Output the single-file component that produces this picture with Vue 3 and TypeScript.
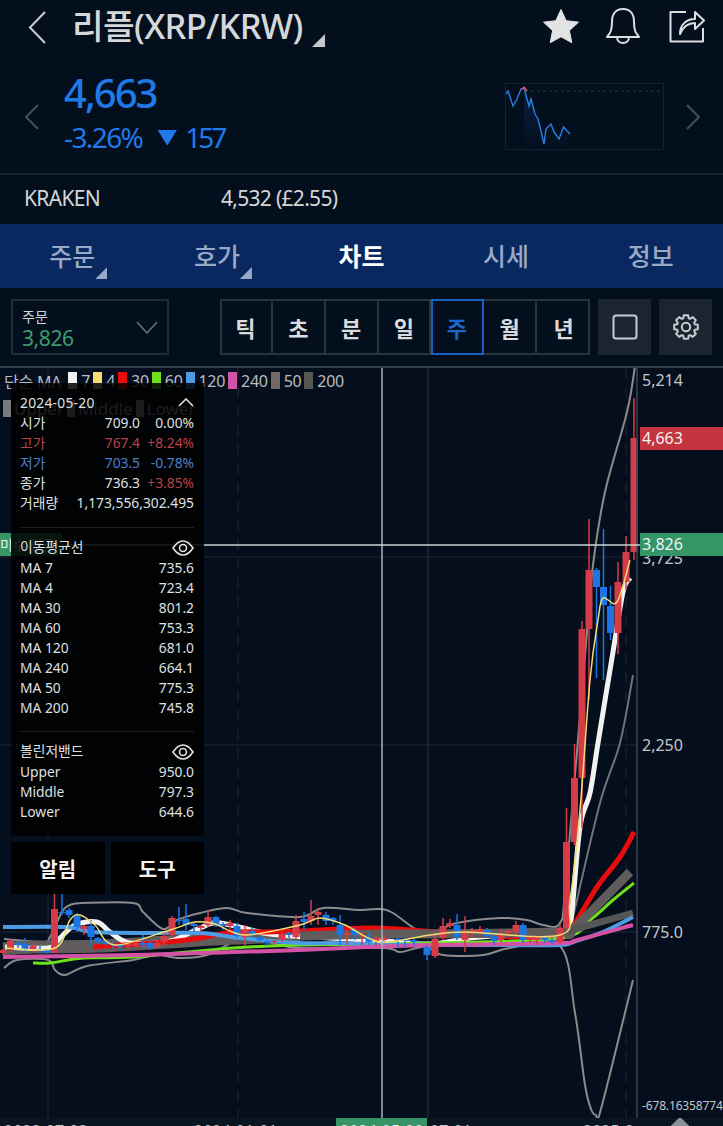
<script setup lang="ts">
import { computed } from 'vue';

type Candle = [number, number, number, number, number, 'r' | 'b'];
type Line = { color: string; width: number; pts: number[][] };

const tabs = [
    { name: '주문', more: true },
    { name: '호가', more: true },
    { name: '차트', active: true },
    { name: '시세' },
    { name: '정보' }
];
const periods = ['틱', '초', '분', '일', '주', '월', '년'];

const legend = [
    { color: '#f1f1f1', label: '7' },
    { color: '#f4dc72', label: '4' },
    { color: '#e80c0c', label: '30' },
    { color: '#6fe01c', label: '60' },
    { color: '#4d9be2', label: '120' },
    { color: '#d452a6', label: '240' },
    { color: '#6f6a68', label: '50' },
    { color: '#565656', label: '200' }
];

const quote = [
    { k: '시가', v: '709.0', p: '0.00%', tone: '' },
    { k: '고가', v: '767.4', p: '+8.24%', tone: 'up' },
    { k: '저가', v: '703.5', p: '-0.78%', tone: 'down' },
    { k: '종가', v: '736.3', p: '+3.85%', tone: 'close' }
];
const maRows = [
    ['MA 7', '735.6'], ['MA 4', '723.4'], ['MA 30', '801.2'], ['MA 60', '753.3'],
    ['MA 120', '681.0'], ['MA 240', '664.1'], ['MA 50', '775.3'], ['MA 200', '745.8']
];
const bandRows = [['Upper', '950.0'], ['Middle', '797.3'], ['Lower', '644.6']];

const axis = [
    { y: 380, t: '5,214' },
    { y: 558, t: '3,725' },
    { y: 745, t: '2,250' },
    { y: 932, t: '775.0' }
];

// x, wick top, body top, body bottom, wick bottom
const candles: Candle[] = [
    [3, 949, 950, 953, 955, 'r'], [10.5, 939, 941, 950, 952, 'r'], [18, 941, 943, 945, 948, 'b'],
    [25, 938, 944, 950, 953, 'b'], [33, 943, 946, 949, 952, 'r'], [40, 946, 949, 950, 953, 'b'],
    [47, 949, 949, 953, 953, 'b'], [54.5, 888, 909, 953, 953, 'r'], [62, 894, 912, 913, 915, 'b'],
    [69, 908, 910, 915, 918, 'b'], [77, 913, 916, 927, 932, 'b'], [84, 925, 926, 929, 935, 'r'],
    [91, 920, 926, 937, 946, 'b'], [98, 937, 938, 942, 944, 'b'], [106, 940, 941, 944, 946, 'b'],
    [113, 942, 944, 945, 948, 'b'], [120, 945, 945, 947, 950, 'b'], [128, 943, 944, 946, 949, 'r'],
    [136, 939, 943, 946, 948, 'r'], [143, 935, 943, 945, 947, 'b'], [150, 941, 943, 948, 950, 'b'],
    [157, 941, 943, 947, 949, 'r'], [164, 932, 936, 942, 944, 'r'], [172, 916, 918, 935, 937, 'r'],
    [179, 907, 920, 921, 925, 'b'], [186, 904, 919, 925, 930, 'b'], [194, 922, 924, 926, 932, 'b'],
    [201, 925, 926, 928, 932, 'r'], [208, 910, 917, 925, 927, 'r'], [216, 916, 917, 925, 927, 'b'],
    [223, 922, 924, 926, 930, 'b'], [230, 920, 923, 926, 930, 'r'], [237, 923, 926, 936, 938, 'b'],
    [245, 925, 930, 937, 946, 'r'], [252, 928, 931, 935, 938, 'b'], [260, 935, 937, 940, 943, 'b'],
    [267, 939, 941, 943, 946, 'b'], [274, 940, 941, 942, 945, 'r'], [282, 931, 934, 940, 942, 'r'],
    [289, 932, 933, 935, 938, 'b'], [296, 915, 921, 937, 939, 'r'], [304, 912, 919, 922, 930, 'b'],
    [311, 900, 916, 921, 925, 'r'], [318, 908, 912, 915, 925, 'r'], [326, 912, 915, 921, 925, 'b'],
    [333, 917, 918, 921, 925, 'b'], [340, 915, 925, 935, 945, 'b'], [347, 930, 933, 935, 945, 'r'],
    [355, 927, 930, 935, 940, 'b'], [362, 932, 935, 936, 945, 'r'], [369, 932, 937, 942, 945, 'b'],
    [376, 936, 938, 941, 946, 'r'], [384, 935, 938, 940, 942, 'r'], [398, 937, 939, 941, 948, 'b'],
    [405, 937, 939, 941, 947, 'b'], [414, 939, 940, 942, 946, 'b'], [427, 945, 947, 955, 960, 'b'],
    [435, 932, 939, 956, 958, 'r'], [443, 918, 926, 938, 940, 'r'], [450, 919, 923, 926, 928, 'r'],
    [457, 914, 925, 937, 940, 'b'], [465, 916, 932, 940, 952, 'r'], [472, 928, 930, 932, 938, 'r'],
    [480, 926, 929, 932, 934, 'r'], [487, 928, 930, 936, 938, 'b'], [494, 933, 936, 941, 945, 'b'],
    [501, 929, 934, 940, 942, 'r'], [508, 929, 931, 933, 936, 'r'], [516, 921, 925, 932, 936, 'r'],
    [523, 923, 925, 940, 943, 'b'], [530, 937, 938, 940, 943, 'r'], [537, 936, 938, 940, 945, 'r'],
    [545, 936, 937, 940, 943, 'b'], [552, 938, 940, 942, 944, 'b'], [560, 924, 928, 942, 944, 'r'],
    [566.5, 808, 842, 928, 930, 'r'], [574.5, 744, 778, 842, 845, 'r'], [582, 621, 629, 778, 828, 'r'],
    [589, 519, 570, 629, 700, 'r'], [596.5, 568, 570, 587, 678, 'b'], [603.5, 529, 587, 605, 680, 'b'],
    [610.5, 586, 606, 633, 640, 'b'], [618, 562, 582, 633, 654, 'r'], [626, 536, 552, 582, 590, 'r'],
    [634, 398, 438, 552, 560, 'r']
];

const lines: Line[] = [
    {
        color: '#8b8b8b', width: 2,
        pts: [[4, 939], [43, 942], [50, 937], [62, 912], [70, 905], [83, 903], [133, 903], [143, 912], [163, 929], [177, 920], [200, 913], [227, 908], [247, 913], [300, 917], [323, 908], [360, 910], [380, 909], [393, 913], [417, 930], [433, 932], [457, 923], [500, 918], [527, 920], [543, 925], [560, 923], [566, 880], [587, 632], [593, 565], [605, 492], [627, 412], [635, 366]]
    },
    {
        color: '#8b8b8b', width: 2,
        pts: [[4, 968], [17, 960], [48, 960], [55, 970], [65, 975], [87, 966], [133, 960], [157, 955], [180, 958], [207, 955], [243, 938], [267, 942], [300, 948], [383, 948], [400, 952], [417, 948], [428, 947], [443, 955], [483, 955], [510, 948], [560, 946], [575, 1013], [585, 1085], [591, 1109], [596, 1115], [601, 1109], [633, 980]]
    },
    {
        color: '#70747a', width: 2,
        pts: [[573, 917], [600, 803], [620, 743], [633, 675]]
    },
    {
        color: '#5f5c5b', width: 13,
        pts: [[3, 949], [33, 947], [100, 946], [167, 942], [233, 938], [300, 936]]
    },
    {
        color: '#f2f2f2', width: 5,
        pts: [[5, 947], [48, 948], [58, 940], [75, 925], [97, 922], [110, 932], [130, 943], [170, 941], [200, 928], [220, 923], [270, 934], [330, 938], [385, 941], [430, 944], [470, 938], [520, 934], [565, 932], [571, 920], [580, 827], [590, 793], [598, 743], [613, 652], [623, 592], [630, 578]]
    },
    {
        color: '#e80c0c', width: 5,
        pts: [[93, 947], [167, 942], [200, 938], [233, 932], [267, 932], [300, 931], [367, 928], [410, 930], [480, 935], [560, 938], [575, 923], [597, 887], [620, 857], [634, 832]]
    },
    {
        color: '#6fe01c', width: 3,
        pts: [[33, 963], [50, 963], [83, 958], [133, 957], [233, 948], [300, 945], [433, 943], [560, 938], [590, 920], [613, 900], [634, 883]]
    },
    {
        color: '#5f5c5b', width: 9,
        pts: [[300, 936], [383, 934], [433, 934], [560, 932], [572, 930], [630, 872]]
    },
    {
        color: '#555', width: 7,
        pts: [[560, 932], [572, 930], [633, 913]]
    },
    {
        color: '#4d9be2', width: 4,
        pts: [[3, 927], [67, 927], [93, 932], [150, 933], [200, 933], [240, 938], [300, 943], [333, 943], [400, 945], [500, 945], [560, 945], [573, 942], [603, 932], [633, 917]]
    },
    {
        color: '#d452a6', width: 4,
        pts: [[3, 957], [133, 955], [233, 952], [300, 950], [367, 947], [433, 945], [560, 943], [577, 940], [633, 925]]
    }
];

const yellow: Line = {
    color: '#f4dc72', width: 1.5,
    pts: [[5, 948], [55, 948], [70, 920], [80, 915], [95, 925], [115, 945], [170, 930], [195, 922], [215, 924], [245, 935], [300, 925], [320, 918], [345, 925], [380, 942], [430, 935], [465, 932], [560, 935], [570, 900], [580, 810], [590, 680], [598, 620], [603, 598], [617, 602], [630, 560]]
};

const toPoints = (pts: number[][]) => pts.map(p => p.join(',')).join(' ');

// catmull-rom through the points so the averages don't look angular
const smooth = (pts: number[][]) => {
    let d = `M${pts[0][0]} ${pts[0][1]}`;
    for (let i = 0; i < pts.length - 1; i++) {
        const p0 = pts[Math.max(i - 1, 0)];
        const p1 = pts[i];
        const p2 = pts[i + 1];
        const p3 = pts[Math.min(i + 2, pts.length - 1)];
        const c1x = p1[0] + (p2[0] - p0[0]) / 6;
        const c1y = p1[1] + (p2[1] - p0[1]) / 6;
        const c2x = p2[0] - (p3[0] - p1[0]) / 6;
        const c2y = p2[1] - (p3[1] - p1[1]) / 6;
        d += `C${c1x.toFixed(1)} ${c1y.toFixed(1)} ${c2x.toFixed(1)} ${c2y.toFixed(1)} ${p2[0]} ${p2[1]}`;
    }
    return d;
};

const miniPts = [[1, 11], [3, 8], [8, 23], [12, 16], [16, 6], [19, 5], [24, 23], [26, 16], [30, 31], [33, 36], [36, 48], [39, 61], [41, 46], [46, 41], [49, 49], [54, 56], [58.5, 44], [65, 51]];
const miniLine = toPoints(miniPts);
const miniFill = computed(() => `19,66 19,5 ${toPoints(miniPts.slice(5))} 65,66`);

const gearPath = computed(() => {
    const parts: string[] = [];
    for (let i = 0; i < 8; i++) {
        const a = (i * Math.PI) / 4;
        const pts: [number, number][] = [[-0.3, 9.2], [-0.18, 12], [0.18, 12], [0.3, 9.2]];
        pts.forEach(([off, r]) => {
            const x = 14 + r * Math.sin(a + off);
            const y = 14 - r * Math.cos(a + off);
            parts.push(`${x.toFixed(2)} ${y.toFixed(2)}`);
        });
    }
    return `M${parts.join('L')}Z`;
});
</script>

<template>
    <div class="screen">
        <header class="top">
            <svg class="back" width="18" height="33" viewBox="0 0 18 33"><path d="M17 1 2 16.500 17 32" /></svg>
            <div class="title">리플(XRP/KRW)</div>
            <span class="corner title-corner"></span>
            <div class="top-icons">
                <svg class="star" width="38" height="36" viewBox="0 0 38 36"><path class="solid" d="M19 1.500l5.200 11.200 12.300 1.500-9.100 8.400 2.400 12.100L19 28.800 8.200 34.700l2.400-12.100-9.100-8.400 12.300-1.500z" /></svg>
                <svg width="36" height="38" viewBox="0 0 36 38"><path class="thin" d="M18 2c-8 0-11 6-11 13 0 8-1.500 11-5 15h32c-3.500-4-5-7-5-15 0-7-3-13-11-13zM12 30c0 4 3 6 6 6s6-2 6-6" /></svg>
                <svg width="36" height="34" viewBox="0 0 36 34"><path class="thin" d="M17 3H1.500v29.500H34V19M11 25c0-9 6-15 15-15V3l9 8.500-9 8.500v-6c-7 0-12 4-15 11z" /></svg>
            </div>
        </header>

        <section class="price-row">
            <svg class="side" width="14" height="26" viewBox="0 0 14 26"><path d="M13 1 1 13l12 12" /></svg>
            <div class="price-block">
                <div class="price">4,663</div>
                <div class="change">
                    <span>-3.26%</span>
                    <i class="down-arrow"></i>
                    <span class="change-num">157</span>
                </div>
            </div>
            <svg class="mini" width="159" height="67" viewBox="0 0 159 67">
                <defs>
                    <linearGradient id="mini-fade" x1="0" y1="0" x2="0" y2="1">
                        <stop offset="0" stop-color="#0d3a78" stop-opacity=".4" />
                        <stop offset="1" stop-color="#0d3a78" stop-opacity="0" />
                    </linearGradient>
                </defs>
                <rect x=".5" y=".5" width="158" height="66" fill="none" stroke="#16202e" />
                <line x1="20" y1="8" x2="158" y2="8" stroke="#2b3440" stroke-dasharray="3 3" />
                <polygon :points="miniFill" fill="url(#mini-fade)" />
                <polyline :points="miniLine" fill="none" stroke="#2a7fe0" stroke-width="1.400" />
                <polyline points="16,7 19,4 22,8" fill="none" stroke="#e0525c" stroke-width="1.400" />
            </svg>
            <svg class="side" width="14" height="26" viewBox="0 0 14 26"><path d="M1 1l12 12L1 25" /></svg>
        </section>

        <section class="exchange">
            <span class="ex-name">KRAKEN</span>
            <span>4,532 (£2.55)</span>
        </section>

        <nav class="tabs">
            <div v-for="tab in tabs" :key="tab.name" class="tab" :class="{ active: tab.active }">
                <span class="tab-label">{{ tab.name }}<span v-if="tab.more" class="corner tab-corner"></span></span>
            </div>
        </nav>

        <section class="toolbar">
            <div class="order-select">
                <div class="order-text">
                    <div class="order-name">주문</div>
                    <div class="order-val">3,826</div>
                </div>
                <svg width="22" height="13" viewBox="0 0 22 13"><path d="M1 1l10 11L21 1" /></svg>
            </div>
            <div class="periods">
                <div v-for="p in periods" :key="p" class="period" :class="{ on: p === '주' }">{{ p }}</div>
            </div>
            <div class="tool-btn">
                <svg width="26" height="26" viewBox="0 0 26 26"><rect x="1.500" y="1.500" width="23" height="23" rx="2.500" /></svg>
            </div>
            <div class="tool-btn">
                <svg width="28" height="28" viewBox="0 0 28 28">
                    <path :d="gearPath" />
                    <circle cx="14" cy="14" r="4.200" />
                </svg>
            </div>
        </section>

        <section class="chart">
            <svg class="plot" width="723" height="750" viewBox="0 368 723 750">
                <g stroke="#1f2935" fill="none">
                    <line x1="0" y1="557" x2="637" y2="557" />
                    <line x1="0" y1="745" x2="637" y2="745" />
                    <line x1="0" y1="932" x2="637" y2="932" />
                    <line x1="48" y1="368" x2="48" y2="1118" />
                    <line x1="428" y1="368" x2="428" y2="1118" stroke="#2a3440" />
                    <line x1="238" y1="368" x2="238" y2="1118" stroke-dasharray="11 8" />
                    <line x1="626" y1="368" x2="626" y2="1118" stroke-dasharray="11 8" />
                </g>
                <path v-for="(l, i) in lines" :key="i" :d="smooth(l.pts)" fill="none" :stroke="l.color" :stroke-width="l.width" stroke-linejoin="round" />
                <g v-for="c in candles" :key="c[0]" :fill="c[5] === 'r' ? '#d63c48' : '#1c75e4'">
                    <rect :x="c[0] - 0.750" :y="c[1]" width="1.500" :height="c[4] - c[1]" />
                    <rect :x="c[0] - 3.500" :y="c[2]" width="7" :height="c[3] - c[2]" />
                </g>
                <path :d="smooth(yellow.pts)" fill="none" :stroke="yellow.color" :stroke-width="yellow.width" />
                <line x1="637" y1="368" x2="637" y2="1118" stroke="#3a4553" stroke-width="1.500" />
                <line x1="382" y1="368" x2="382" y2="1118" stroke="#aeb4b8" stroke-width="1.500" />
                <line x1="0" y1="545" x2="640" y2="545" stroke="#c4d4d2" stroke-width="1.500" />
            </svg>

            <div class="legend">
                <span class="legend-name">단순 MA</span>
                <template v-for="item in legend" :key="item.label">
                    <i class="swatch" :style="{ background: item.color }"></i>
                    <span class="legend-num">{{ item.label }}</span>
                </template>
            </div>
            <div class="legend-bands">
                <i class="band-swatch light"></i><span>Upper</span>
                <i class="band-swatch"></i><span>Middle</span>
                <i class="band-swatch"></i><span>Lower</span>
            </div>

            <div class="cross-tag">미수 평균</div>

            <div v-for="a in axis" :key="a.t" class="axis-label" :style="{ top: `${a.y - 380}px` }">{{ a.t }}</div>
            <div class="axis-label min-label">-678.16358774</div>
            <div class="price-tag red">4,663</div>
            <div class="price-tag green">3,826</div>

            <aside class="info">
                <div class="panel">
                    <div class="panel-date">
                        <span>2024-05-20</span>
                        <svg width="16" height="9" viewBox="0 0 16 9"><path d="M1 8l7-7 7 7" /></svg>
                    </div>
                    <div v-for="q in quote" :key="q.k" class="row" :class="q.tone">
                        <span>{{ q.k }}</span>
                        <span class="row-right"><span>{{ q.v }}</span><span class="pct">{{ q.p }}</span></span>
                    </div>
                    <div class="row">
                        <span>거래량</span>
                        <span>1,173,556,302.495</span>
                    </div>
                    <hr class="rule first-rule">
                    <div class="row heading">
                        <span>이동평균선</span>
                        <svg class="eye" width="22" height="16" viewBox="0 0 22 16">
                            <path d="M1 8c3-4.500 6.500-7 10-7s7 2.500 10 7c-3 4.500-6.500 7-10 7S4 12.500 1 8z" />
                            <circle cx="11" cy="8" r="3.500" />
                        </svg>
                    </div>
                    <div v-for="r in maRows" :key="r[0]" class="row">
                        <span>{{ r[0] }}</span><span>{{ r[1] }}</span>
                    </div>
                    <hr class="rule second-rule">
                    <div class="row heading">
                        <span>볼린저밴드</span>
                        <svg class="eye" width="22" height="16" viewBox="0 0 22 16">
                            <path d="M1 8c3-4.500 6.500-7 10-7s7 2.500 10 7c-3 4.500-6.500 7-10 7S4 12.500 1 8z" />
                            <circle cx="11" cy="8" r="3.500" />
                        </svg>
                    </div>
                    <div v-for="r in bandRows" :key="r[0]" class="row">
                        <span>{{ r[0] }}</span><span>{{ r[1] }}</span>
                    </div>
                </div>
                <div class="panel-actions">
                    <div class="action">알림</div>
                    <div class="action">도구</div>
                </div>
            </aside>
        </section>

        <footer class="xaxis">
            <span class="date d1">2023-07-03</span>
            <span class="date d2">2024-01-01</span>
            <span class="date d3">2024-05-20</span>
            <span class="date d4">07-01</span>
            <span class="date d5">2025-0</span>
            <i class="handle"></i>
        </footer>
    </div>
</template>

<style scoped>
.screen {
    width: 723px;
    height: 1126px;
    overflow: hidden;
    background: #040f1d;
    color: #dcdee2;
    font-family: "Noto Sans", "Noto Sans CJK KR", sans-serif;
}

.top {
    display: flex;
    align-items: center;
    height: 54px;
    padding: 0 18px 0 28px;
    position: relative;
}

.back path,
.side path,
.order-select path {
    fill: none;
    stroke: #c9ccd0;
    stroke-width: 2;
}

.side {
    margin-top: 6px;
}

.side path {
    stroke: #454e5a;
}

.title {
    margin-left: 26px;
    margin-top: -2px;
    font-size: 34.500px;
    line-height: 44px;
    letter-spacing: -.7px;
    color: #d5d7da;
    font-weight: 500;
    white-space: nowrap;
}

.corner {
    display: block;
    position: absolute;
    background: #c4c8cc;
    clip-path: polygon(100% 0, 100% 100%, 0 100%);
}

.title-corner {
    left: 312px;
    top: 34px;
    width: 13px;
    height: 13px;
}

.top-icons {
    margin-left: auto;
    display: flex;
    align-items: center;
    gap: 28px;
    padding-bottom: 2px;
}

.star {
    margin-right: -3px;
}

.solid {
    fill: #e2e3e5;
    stroke: #e2e3e5;
    stroke-width: 1;
    stroke-linejoin: round;
}

.thin {
    fill: none;
    stroke: #dcdee0;
    stroke-width: 2;
    stroke-linejoin: round;
}

.price-row {
    display: flex;
    align-items: center;
    height: 121px;
    padding: 0 23px 0 25px;
    border-bottom: 2px solid #18222e;
    box-sizing: border-box;
}

.price-block {
    margin-left: 25px;
    margin-top: -5px;
    flex: 1;
}

.price {
    font-size: 40px;
    line-height: 46px;
    letter-spacing: -2px;
    color: #2079e8;
    font-weight: 500;
}

.change {
    display: flex;
    align-items: center;
    margin-top: 5px;
    font-size: 28px;
    line-height: 32px;
    letter-spacing: -1.600px;
    color: #2079e8;
}

.change-num {
    letter-spacing: -3px;
}

.down-arrow {
    width: 20px;
    height: 16px;
    margin: 2px 8px 0 15px;
    background: #2079e8;
    clip-path: polygon(0 0, 100% 0, 50% 100%);
}

.mini {
    margin-right: 22px;
    margin-top: 6px;
}

.exchange {
    display: flex;
    align-items: center;
    height: 49px;
    padding-left: 24px;
    padding-bottom: 4px;
    box-sizing: border-box;
    font-size: 21px;
    letter-spacing: -.7px;
    color: #d4d6d9;
}

.ex-name {
    width: 197px;
}

.tabs {
    display: grid;
    grid-template-columns: repeat(5, 1fr);
    height: 64px;
    background: #08285f;
}

.tab {
    display: flex;
    align-items: center;
    justify-content: center;
    font-size: 25px;
    font-weight: 500;
    color: #9aaac6;
    padding-bottom: 2px;
}

.tab.active {
    color: #fff;
    font-weight: 700;
}

.tab-label {
    position: relative;
}

.tab-corner {
    right: -12px;
    bottom: -6px;
    width: 12px;
    height: 12px;
    background: #9aaac6;
}

.toolbar {
    display: flex;
    align-items: center;
    height: 78px;
    padding: 0 11px;
    border-bottom: 2px solid #333d49;
    box-sizing: content-box;
}

.order-select {
    display: flex;
    align-items: center;
    justify-content: space-between;
    width: 158px;
    height: 56px;
    padding: 0 9px 0 9px;
    box-sizing: border-box;
    border: 2px solid #222c38;
}

.order-select path {
    stroke: #6b747e;
    stroke-width: 1.500;
}

.order-text {
    padding-top: 4px;
}

.order-name {
    font-size: 14px;
    line-height: 18px;
    color: #d4d6d9;
}

.order-val {
    font-size: 21px;
    line-height: 24px;
    letter-spacing: -.4px;
    color: #3f9a6b;
}

.periods {
    display: grid;
    grid-template-columns: repeat(7, 1fr);
    width: 370px;
    height: 56px;
    margin-left: 51px;
    outline: 2px solid #2a343f;
    outline-offset: -2px;
}

.period {
    display: flex;
    align-items: center;
    justify-content: center;
    border-right: 2px solid #2a343f;
    font-size: 22px;
    font-weight: 700;
    color: #d9dbde;
}

.period:last-child {
    border-right: 0;
}

.period.on {
    color: #1a66cc;
    outline: 2px solid #1a5fc4;
    outline-offset: -2px;
    position: relative;
}

.tool-btn {
    display: flex;
    align-items: center;
    justify-content: center;
    width: 53px;
    height: 56px;
    margin-left: 8px;
    background: #1a2531;
}

.tool-btn rect,
.tool-btn path,
.tool-btn circle {
    fill: none;
    stroke: #c9ccd0;
    stroke-width: 2;
    stroke-linejoin: round;
}

.chart {
    position: relative;
    height: 750px;
    overflow: hidden;
    background: #040e1c;
}

.plot {
    position: absolute;
    inset: 0;
}

.legend {
    position: absolute;
    left: 4px;
    top: 4px;
    display: flex;
    align-items: center;
    height: 17px;
    font-size: 16px;
    color: #b9bcc0;
}

.legend-name {
    margin-right: 4px;
    letter-spacing: -.2px;
}

.swatch {
    width: 9px;
    height: 17px;
    margin: 0 4px 0 3px;
}

.legend-num {
    letter-spacing: -.3px;
}

.legend-bands {
    position: absolute;
    left: 3px;
    top: 32px;
    display: flex;
    align-items: center;
    gap: 3px;
    height: 17px;
    font-size: 17px;
    color: #c4c7ca;
}

.band-swatch {
    width: 8px;
    height: 17px;
    background: #c4c7ca;
}

.band-swatch.light {
    background: #77797c;
}

.cross-tag {
    position: absolute;
    left: 0;
    top: 165px;
    width: 62px;
    height: 23px;
    background: #359567;
    color: #e8f3ee;
    font-size: 14px;
    line-height: 23px;
    overflow: hidden;
    white-space: nowrap;
}

.axis-label {
    position: absolute;
    left: 642px;
    font-size: 16px;
    line-height: 24px;
    color: #c4c7ca;
}

.min-label {
    top: 726px;
    font-size: 12px;
    letter-spacing: -.15px;
    white-space: nowrap;
}

.price-tag {
    position: absolute;
    left: 640px;
    width: 83px;
    height: 23px;
    padding-left: 2px;
    box-sizing: border-box;
    font-size: 16px;
    line-height: 23px;
    color: #f2f2f2;
}

.price-tag.red {
    top: 59px;
    background: #c4343f;
}

.price-tag.green {
    top: 165px;
    background: #359567;
}

.info {
    position: absolute;
    left: 11px;
    top: 15px;
    width: 193px;
}

.panel {
    height: 453px;
    padding: 9px 10px 0 9px;
    box-sizing: border-box;
    background: rgba(0, 0, 0, .86);
    font-size: 13.800px;
    color: #dfe0e2;
}

.panel-date {
    display: flex;
    align-items: center;
    justify-content: space-between;
    height: 20px;
    letter-spacing: .25px;
}

.panel-date path,
.eye path,
.eye circle {
    fill: none;
    stroke: #dfe0e2;
    stroke-width: 1.600;
}

.row {
    display: flex;
    align-items: center;
    justify-content: space-between;
    height: 20px;
    white-space: nowrap;
}

.row-right {
    display: flex;
    justify-content: flex-end;
}

.pct {
    width: 54px;
    text-align: right;
}

.row.up {
    color: #b8434c;
}

.row.down {
    color: #4f7fcf;
}

.row.close .pct {
    color: #b8434c;
}

.rule {
    margin: 0;
    border: 0;
    height: 1px;
    background: #1c1f23;
}

.first-rule {
    margin-top: 15px;
    margin-bottom: 9px;
}

.second-rule {
    margin-top: 14px;
    margin-bottom: 9px;
}

.heading {
    align-items: flex-start;
    line-height: 20px;
}

.eye {
    margin-top: 3px;
}

.panel-actions {
    display: flex;
    gap: 6px;
    margin-top: 6px;
}

.action {
    flex: 1;
    display: flex;
    align-items: center;
    justify-content: center;
    height: 52px;
    background: #000;
    font-size: 20px;
    font-weight: 700;
    color: #f2f2f2;
}

.xaxis {
    position: relative;
    height: 8px;
    overflow: hidden;
    background: #0a1522;
}

.date {
    position: absolute;
    top: 3px;
    font-size: 16px;
    line-height: 20px;
    color: #c4c7ca;
    white-space: nowrap;
}

.d1 {
    left: 4px;
}

.d2 {
    left: 194px;
}

.d3 {
    left: 336px;
    width: 91px;
    height: 20px;
    top: 0;
    padding: 3px 0 0 4px;
    box-sizing: border-box;
    background: #359567;
    color: #e8f3ee;
}

.d4 {
    left: 430px;
}

.d5 {
    left: 583px;
}

.handle {
    position: absolute;
    left: 672px;
    top: 2px;
    width: 16px;
    height: 16px;
    background: #8a9097;
    transform: rotate(45deg);
}
</style>

<style>
body {
    background: #040f1d;
}
</style>
